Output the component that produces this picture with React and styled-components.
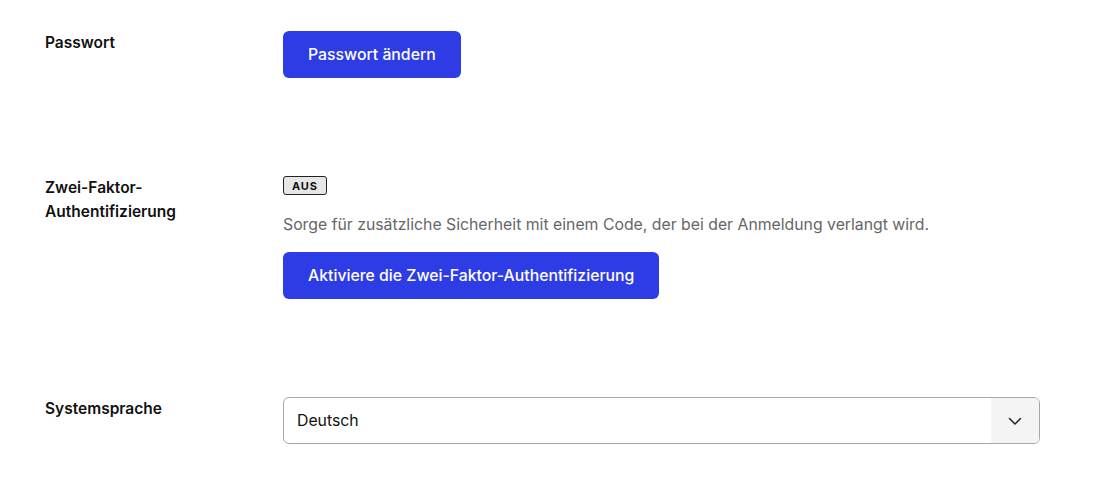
import React from 'react'
import styled, { createGlobalStyle } from 'styled-components'

const GlobalStyle = createGlobalStyle`
    body {
        margin: 0;
        background: #ffffff;
        font-family: Inter, "Noto Sans", sans-serif;
        color: #111111;
    }
`;

const Page = styled.div`
    display: flex;
    flex-direction: column;
    gap: 98px;
    padding: 31px 54px 0 45px;
`;

const Row = styled.div`
    display: grid;
    grid-template-columns: 238px 1fr;
    align-items: start;
`;

const Label = styled.div`
    font-size: 15.5px;
    font-weight: 600;
    line-height: 24px;
    width: 150px;
`;

const Content = styled.div`
    display: flex;
    flex-direction: column;
    align-items: flex-start;
`;

const Button = styled.button`
    height: 47px;
    padding: 0 25px;
    border: none;
    border-radius: 6px;
    background: #2e3ce6;
    color: #ffffff;
    font-family: inherit;
    font-size: 15.8px;
    font-weight: 500;
    cursor: pointer;
`;

const Badge = styled.span`
    display: inline-flex;
    align-items: center;
    height: 19px;
    box-sizing: border-box;
    padding: 0 8px;
    border: 1px solid #222222;
    border-radius: 3px;
    background: #e6e6e6;
    font-size: 11px;
    font-weight: 700;
    letter-spacing: 0.8px;
    margin-bottom: 19px;
`;

const Description = styled.p`
    margin: 0 0 16px;
    font-size: 15.8px;
    line-height: 22px;
    color: #666666;
`;

const Select = styled.div`
    display: flex;
    height: 47px;
    box-sizing: border-box;
    border: 1px solid #a8a8a8;
    border-radius: 6px;
    overflow: hidden;
`;

const Value = styled.div`
    flex: 1;
    display: flex;
    align-items: center;
    padding-left: 13px;
    font-size: 15.8px;
`;

const Chevron = styled.div`
    width: 48px;
    display: flex;
    align-items: center;
    justify-content: center;
    background: #f4f4f4;
`;

const App = () => {
  return (
    <>
      <GlobalStyle />
      <Page>
        <Row>
          <Label>Passwort</Label>
          <Content>
            <Button>Passwort ändern</Button>
          </Content>
        </Row>
        <Row>
          <Label>Zwei-Faktor-Authentifizierung</Label>
          <Content>
            <Badge>AUS</Badge>
            <Description>
              Sorge für zusätzliche Sicherheit mit einem Code, der bei der Anmeldung verlangt wird.
            </Description>
            <Button>Aktiviere die Zwei-Faktor-Authentifizierung</Button>
          </Content>
        </Row>
        <Row>
          <Label>Systemsprache</Label>
          <Select>
            <Value>Deutsch</Value>
            <Chevron>
              <svg width="16" height="16" viewBox="0 0 16 16" fill="none">
                <path d="M2.5 5.5L8 11l5.5-5.5" stroke="#222" strokeWidth="1.5" strokeLinecap="round" strokeLinejoin="round" />
              </svg>
            </Chevron>
          </Select>
        </Row>
      </Page>
    </>
  )
};

export default App;
